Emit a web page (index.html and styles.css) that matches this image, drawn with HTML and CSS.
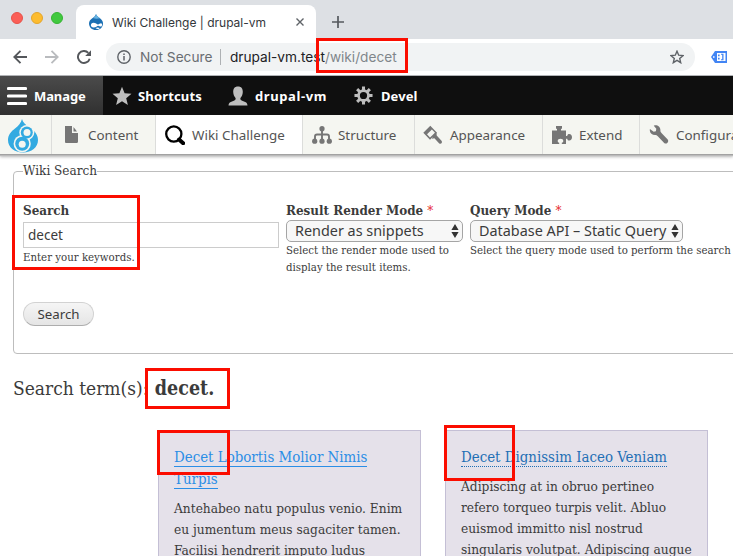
FILE: index.html
```html
<!DOCTYPE html>
<html lang="en">
<head>
<meta charset="utf-8">
<title>Wiki Challenge | drupal-vm</title>
<link rel="stylesheet" href="styles.css">
</head>
<body>
<header class="browser">
  <div class="tabs">
    <div class="lights"><i class="red"></i><i class="yellow"></i><i class="green"></i></div>
    <div class="tab">
      <svg class="favicon" viewBox="0 0 14 16" width="14" height="16"><path fill="#1c70b4" d="M7 0c.5 2 2 2.800 4 4.200 2 1.500 3 3.200 3 5.300C14 13.300 11 16 7 16S0 13.300 0 9.500c0-2.400 1.400-4 3-5.100C5 3.200 6.500 2 7 0z"/><path fill="#69b4e2" d="M7 0c.5 2 2 2.800 4 4.200C8.500 4.800 6.500 5 4 4c2-1 2.800-2.300 3-4z"/><path fill="#fff" d="M4.500 8.700c2 0 3.500 1.700 4.500 1.700s2-1.200 3-1.200c1.500 0 1.400 3.300-.1 3.300-1 0-1.800-.8-2.700-.8-1.200 0-2.200 1.800-4.500 1.800-3.800 0-3.600-4.800-.2-4.800zM6.500 14c1.500-.7 3-.7 4.200 0-.5 1.300-3 1.300-4.200 0z"/></svg>
      <span class="tab-title">Wiki Challenge | drupal-vm</span>
      <svg class="close" viewBox="0 0 8 8" width="8" height="8"><path d="M.5.5l7 7M7.500.5l-7 7" stroke="#5f6368" stroke-width="1.400"/></svg>
    </div>
    <svg class="plus" viewBox="0 0 12 12" width="12" height="12"><path d="M6 0v12M0 6h12" stroke="#55595e" stroke-width="1.700"/></svg>
  </div>
  <div class="toolbar">
    <svg class="back" viewBox="0 0 14 14" width="14" height="14"><path d="M14 7H1.500M7.500.8L1.300 7l6.200 6.200" fill="none" stroke="#54575b" stroke-width="1.900"/></svg>
    <svg class="forward" viewBox="0 0 14 14" width="14" height="14"><path d="M0 7h12.500M6.500.8L12.700 7l-6.200 6.200" fill="none" stroke="#b9bbbe" stroke-width="1.800"/></svg>
    <svg class="reload" viewBox="0 0 14 14" width="14" height="14"><path d="M12.700 8.700A6 6 0 1 1 11.300 2.800" fill="none" stroke="#54575b" stroke-width="1.900"/><path d="M14 .2V6H8.200z" fill="#54575b"/></svg>
    <div class="omnibox">
      <svg class="info" viewBox="0 0 14 14" width="14" height="14"><circle cx="7" cy="7" r="6.200" fill="none" stroke="#5f6368" stroke-width="1.400"/><path d="M7 6v4.500M7 3.400V5" stroke="#5f6368" stroke-width="1.500"/></svg>
      <span class="secure">Not Secure</span>
      <span class="url">drupal-vm.test<span>/wiki/decet</span></span>
      <svg class="bookmark" viewBox="0 0 14 14" width="14" height="14"><path d="M7 1.200l1.700 4 4.300.4-3.300 2.800 1 4.300L7 10.400l-3.700 2.300 1-4.300L1 5.600l4.300-.4z" fill="none" stroke="#5f6368" stroke-width="1.400"/></svg>
    </div>
    <svg class="extension" viewBox="0 0 16 12" width="16" height="12"><path d="M4 0h12v12H4L0 6z" fill="#4285f4"/><path d="M6 2h8.500v8H6z" fill="#fff"/><path d="M7 3.600h1.600v1.600H7zm0 3.200h1.600v1.600H7zM10 2.800h2.500v6.400H10V8.200h1.200V3.800H10z" fill="#4285f4"/><path d="M2 5.200h1.500v1.600H2z" fill="#fff"/></svg>
  </div>
</header>

<nav class="bar">
  <a class="manage"><svg viewBox="0 0 20 20" width="20" height="20"><path d="M1.500 2.500h17M1.500 10h17M1.500 17.500h17" stroke="#fff" stroke-width="3.200" stroke-linecap="round"/></svg>Manage</a>
  <a class="shortcuts"><svg viewBox="0 0 20 20" width="20" height="20"><path fill="#bebebe" d="M10 .8l2.600 6.500 6.900.4-5.300 4.500 1.700 6.800-5.900-3.700L4.100 19l1.700-6.800L.5 7.700l6.900-.4z"/></svg>Shortcuts</a>
  <a class="user"><svg viewBox="0 0 20 20" width="20" height="20"><path fill="#bebebe" d="M10 .5c3.500 0 4.800 2.200 4.800 5.300 0 2.700-1 4.400-2 5.700-.8 1.100-.6 2.300.8 2.900l3.600 1.500c1.500.6 2.100 1.600 2.300 3.600H.5c.2-2 .8-3 2.300-3.600l3.600-1.500c1.400-.6 1.600-1.800.8-2.900-1-1.300-2-3-2-5.700C5.200 2.700 6.500.5 10 .5z"/></svg>drupal-vm</a>
  <a class="devel"><svg viewBox="0 0 20 20" width="19" height="19"><g stroke="#bebebe" stroke-width="3.200"><path d="M10 .5v4M10 15.500v4M.5 10h4M15.500 10h4M3.300 3.300l2.800 2.800M13.900 13.900l2.800 2.800M3.300 16.700l2.800-2.800M13.900 6.100l2.800-2.800"/><circle cx="10" cy="10" r="5.200" fill="none" stroke-width="2.800"/></g></svg>Devel</a>
</nav>

<nav class="tray">
  <a class="logo"><svg viewBox="0 0 30 34" width="30" height="34"><path fill="#33aae1" d="M14 0c1 3.500 3.500 5.500 7 8 5 3.500 9 7 9 13 0 7.500-6.500 12.500-15 12.500S0 28.500 0 21c0-5 3-8.500 7-11.500 3.500-2.500 6-5.500 7-9.500z"/><circle cx="18.800" cy="13.500" r="7.500" fill="#f5f6f1"/><circle cx="14.200" cy="24.700" r="8.600" fill="#f5f6f1"/><circle cx="18.800" cy="13.500" r="6" fill="#33aae1"/><circle cx="14.200" cy="24.700" r="7" fill="#33aae1"/><circle cx="19" cy="13.500" r="3.500" fill="#f5f6f1"/><circle cx="14.200" cy="25.300" r="3.500" fill="#f5f6f1"/></svg></a>
  <a class="content"><svg viewBox="0 0 13 17" width="13" height="17"><path fill="#767676" d="M0 0h7v7h6v8.500c0 .8-.5 1.500-1.300 1.500H1.300C.5 17 0 16.500 0 15.700zM8.500 1L12 5.500H8.500z"/></svg>Content</a>
  <a class="wiki"><svg viewBox="0 0 20 20" width="20" height="20"><circle cx="8.800" cy="9" r="7.600" fill="none" stroke="#000" stroke-width="2.300"/><path d="M14 14.500l4.200 3.700" stroke="#000" stroke-width="4" stroke-linecap="round"/></svg>Wiki Challenge</a>
  <a class="structure"><svg viewBox="0 0 20 18" width="20" height="18"><path d="M10 3v11M3 14v-3.500q0-2 2-2h10q2 0 2 2V14" fill="none" stroke="#767676" stroke-width="1.900"/><g fill="#767676"><circle cx="10" cy="2.700" r="2.600"/><circle cx="2.700" cy="15.200" r="2.600"/><circle cx="10" cy="15.200" r="2.600"/><circle cx="17.300" cy="15.200" r="2.600"/></g></svg>Structure</a>
  <a class="appearance"><svg viewBox="0 0 20 20" width="20" height="20"><path fill="#767676" fill-rule="evenodd" d="M7.300.8L14 7.700 7 14.700.3 7.800zM8.900 4.500L4 9.300l3 3.200 5-4.800z"/><path fill="#767676" d="M11 9l2.500-1.500.2 3 4.800 5.300c1.500 2-.8 4-2.500 2.400l-4.600-5-2.600.6z"/></svg>Appearance</a>
  <a class="extend"><svg viewBox="0 0 20 18" width="20" height="18"><path fill="#767676" d="M0 4.500h5V2.800H4V0h6v2.800H9v1.700h5V10h1.200c.2-1.500 1-2 2-2 1.800 0 2.800 1.500 2.800 3.300s-1 3.200-2.800 3.200c-1 0-1.800-.5-2-1.800H14V18h-4.200v-1.200c1.200-.4 1.500-1 1.500-1.800 0-1.400-1.200-2.200-2.800-2.200s-2.800.8-2.800 2.200c0 .8.300 1.400 1.500 1.800V18H0z"/></svg>Extend</a>
  <a class="config"><svg viewBox="0 0 20 20" width="20" height="20"><path fill="#767676" d="M4.800.7c3-1.200 6.700.8 6.600 4.500-.1 1.500.3 2.200 1.300 3l6 6.300c1.700 2-1.200 5.500-3.500 3.500l-6.400-6.800c-.8-.8-1.600-1.200-2.800-1.200C3.200 10 1 8.300.8 5.500L.9 4l3.800 2.800 2.200-.5.400-2.500z"/></svg>Configuration</a>
</nav>

<main class="page">
  <fieldset>
    <legend>Wiki Search</legend>
    <div class="fields">
      <div class="field keys">
        <label>Search</label>
        <div class="input">decet</div>
        <p>Enter your keywords.</p>
      </div>
      <div class="field render">
        <label>Result Render Mode <b>*</b></label>
        <div class="select">Render as snippets<svg viewBox="0 0 8 14" width="8" height="14"><path d="M4 0l3.600 6H.4zM4 14L.4 8h7.200z" fill="#333"/></svg></div>
        <p>Select the render mode used to<br>display the result items.</p>
      </div>
      <div class="field query">
        <label>Query Mode <b>*</b></label>
        <div class="select">Database API – Static Query<svg viewBox="0 0 8 14" width="8" height="14"><path d="M4 0l3.600 6H.4zM4 14L.4 8h7.200z" fill="#333"/></svg></div>
        <p>Select the query mode used to perform the search</p>
      </div>
    </div>
    <div class="button">Search</div>
  </fieldset>
  <h2>Search term(s): <b>decet.</b></h2>
  <div class="results">
    <article>
      <h3><a class="hovered">Decet Lobortis Molior Nimis<br>Turpis</a></h3>
      <p>Antehabeo natu populus venio. Enim<br>eu jumentum meus sagaciter tamen.<br>Facilisi hendrerit imputo ludus</p>
    </article>
    <article>
      <h3><a>Decet Dignissim Iaceo Veniam</a></h3>
      <p>Adipiscing at in obruo pertineo<br>refero torqueo turpis velit. Abluo<br>euismod immitto nisl nostrud<br>singularis volutpat. Adipiscing augue</p>
    </article>
  </div>
</main>

<div class="mark mark-url"></div>
<div class="mark mark-keys"></div>
<div class="mark mark-term"></div>
<div class="mark mark-first"></div>
<div class="mark mark-second"></div>
</body>
</html>
```
FILE: styles.css
```css
* { box-sizing: border-box; }
html, body { height: 556px; overflow: hidden; }
body {
  margin: 0;
  position: relative;
  background: #fff;
  color: #3b3b3b;
  font-family: "DejaVu Serif Condensed", "DejaVu Serif", serif;
  font-stretch: condensed;
  white-space: nowrap;
}
svg { flex: none; display: block; }

/* Browser chrome */
.browser { font-family: Inter, "Liberation Sans", sans-serif; }
.tabs { height: 39px; background: #dde0e4; display: flex; align-items: flex-end; }
.lights { display: flex; gap: 8px; padding: 12px 0 0 11px; width: 76px; height: 39px; }
.lights i { width: 12px; height: 12px; border-radius: 50%; }
.red { background: #fb5f57; border: 1px solid #e6534a; }
.yellow { background: #fdbc2f; border: 1px solid #e3a52c; }
.green { background: #41c93f; border: 1px solid #36b333; }
.tab { width: 240px; height: 34px; background: #fff; border-radius: 8px 8px 0 0; display: flex; align-items: center; padding: 0 12px 0 13px; }
.tab-title { font-size: 12px; margin-left: 9px; color: #33373b; flex: 1; }
.favicon { margin-bottom: 1px; }
.plus { margin: 0 0 11px 16px; }
.toolbar { height: 37px; padding-left: 13px; display: flex; align-items: center; border-bottom: 1px solid #b1b3b6; background: #fff; }
.forward { margin-left: 18px; }
.reload { margin: 0 15px 0 18px; }
.omnibox { width: 589px; height: 28px; background: #f1f3f4; border-radius: 14px; display: flex; align-items: center; padding: 0 11px; font-size: 13.7px; }
.secure { margin-left: 9px; padding-right: 8px; border-right: 1px solid #aeb1b4; color: #696d72; line-height: 16px; width: 81px; }
.url { margin-left: 9px; color: #202124; flex: 1; letter-spacing: -.01px; }
.url span { color: #80868b; }
.extension { margin-left: 16px; }

/* Administration bar */
.bar, .tray { font-family: "Noto Sans", "Open Sans", sans-serif; display: flex; }
.bar { height: 39px; background: #0f0f0f; color: #fff; font-size: 13px; font-weight: 700; }
.bar a, .tray a { display: flex; align-items: center; }
.manage { width: 103px; padding-left: 7px; gap: 7px; background: linear-gradient(#4b4b4b, #303030); letter-spacing: -.1px; }
.shortcuts { width: 117px; padding-left: 9px; gap: 6px; letter-spacing: .15px; }
.user { width: 125px; padding-left: 8px; gap: 7px; letter-spacing: .6px; }
.devel { padding-left: 9px; gap: 8px; letter-spacing: .1px; }

/* Menu tray */
.tray { position: relative; height: 39px; background: #f5f6f1; color: #545454; font-size: 13.4px; box-shadow: 0 1px 0 #a2a2a2, 0 2px 1px #bbb, 0 3px 3px #bbb; }
.tray a { border-right: 1px solid #dcdddb; flex: none; }
.tray .logo { width: 52px; padding: 4px 0 0 8px; align-items: flex-start; }
.tray .content { width: 104px; padding-left: 13px; gap: 10px; }
.tray .wiki { width: 147px; padding-left: 9px; gap: 7px; background: #fff; }
.tray .structure { width: 112px; padding-left: 9px; gap: 6px; }
.tray .appearance { width: 128px; padding-left: 8px; gap: 7px; }
.tray .extend { width: 97px; padding-left: 9px; gap: 7px; }
.tray .config { padding-left: 9px; gap: 7px; }

/* Search form */
.page { padding-left: 13px; height: 402px; }
fieldset { margin: 8px 0 0; padding: 0 0 0 9px; width: 740px; height: 192px; border: 1px solid #bdbdbd; border-radius: 4px; }
legend { padding: 0; height: 18px; line-height: 18px; font-size: 13.45px; }
.fields { display: flex; height: 122px; padding-top: 21px; }
.field label { display: block; font-size: 13.3px; font-weight: 700; height: 19px; line-height: 20px; }
.field label b { color: #e62a2a; font-weight: 400; }
.field p { margin: 0; font-size: 11.35px; line-height: 17px; }
.keys { width: 263px; }
.render { width: 184px; }
.input, .select, .button { font-family: "Noto Sans", "Open Sans", sans-serif; color: #3b3b3b; }
.input { width: 256px; height: 26px; margin: 2px 0 1px; border: 1px solid #ccc; padding-left: 4px; line-height: 24px; font-size: 13.5px; }
.select { display: flex; align-items: center; justify-content: space-between; width: 177px; height: 22px; border: 1px solid #a5a5a5; border-radius: 5px; background: #f7f7f7; padding: 0 3px 0 8px; font-size: 14.4px; line-height: 20px; }
.query .select { width: 213px; }
.button { width: 71px; height: 24px; border: 1px solid #d2d2d2; border-bottom-color: #adadad; border-radius: 12px; background: linear-gradient(#f5f5f5, #e5e5e5); text-align: center; font-size: 13.3px; line-height: 22px; }

/* Results */
h2 { margin: 20px 0 0; font-size: 19px; font-weight: 400; line-height: 28px; height: 56px; }
h2 b { font-size: 19.5px; margin-left: 1px; }
.results { display: flex; gap: 24px; padding-left: 145px; }
article { width: 263px; height: 150px; flex: none; background: #e5e1ea; border: 1px solid #c4bfd5; padding: 15px; }
h3 { margin: 0 0 8px; font-size: 14.9px; font-weight: 400; line-height: 22px; }
h3 a { color: #1f6fb5; border-bottom: 1px dotted #1f6fb5; }
h3 a.hovered { color: #2b8ee6; border-bottom-style: solid; border-color: #2b8ee6; }
article p { margin: 0; font-size: 13.6px; line-height: 21px; }

/* Callout frames over the page */
.mark { position: absolute; border: 3px solid #fb0d00; }
.mark-url { left: 316px; top: 38px; width: 92px; height: 35px; }
.mark-keys { left: 12px; top: 195px; width: 128px; height: 75px; }
.mark-term { left: 145px; top: 368px; width: 85px; height: 41px; }
.mark-first { left: 157px; top: 430px; width: 73px; height: 45px; }
.mark-second { left: 444px; top: 425px; width: 71px; height: 56px; }
```
